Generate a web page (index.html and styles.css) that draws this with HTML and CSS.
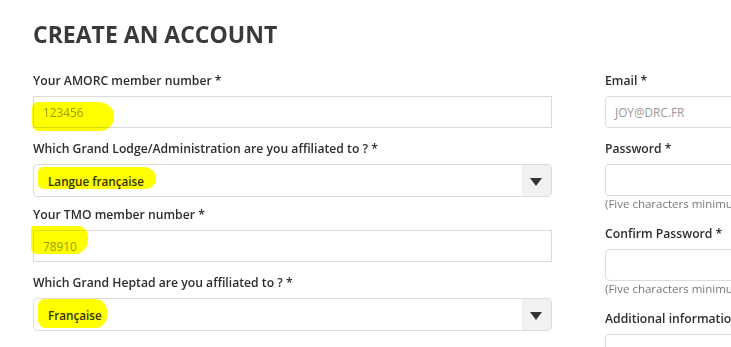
FILE: index.html
```html
<!DOCTYPE html>
<html>
<head>
  <title>Create an account</title>
  <link rel="stylesheet" href="styles.css">
</head>
<body>
  <div class="container">
    <h1>Create an account</h1>

    <div class="columns">
      <div class="col-left">
        <label class="field-label">Your AMORC member number *</label>
        <div class="box input-box">
          <span class="placeholder">123456</span>
          <span class="marker marker-1"></span>
        </div>

        <label class="field-label">Which Grand Lodge/Administration are you affiliated to ? *</label>
        <div class="box select-box">
          <span class="value">Langue française</span>
          <span class="arrow"></span>
          <span class="marker marker-2"></span>
        </div>

        <label class="field-label">Your TMO member number *</label>
        <div class="box input-box">
          <span class="placeholder">78910</span>
          <span class="marker marker-3"></span>
        </div>

        <label class="field-label">Which Grand Heptad are you affiliated to ? *</label>
        <div class="box select-box">
          <span class="value">Française</span>
          <span class="arrow"></span>
          <span class="marker marker-4"></span>
        </div>
      </div>

      <div class="col-right">
        <label class="field-label">Email *</label>
        <div class="box input-box rounded">
          <span class="placeholder">JOY@DRC.FR</span>
        </div>

        <label class="field-label">Password *</label>
        <div class="box input-box rounded with-hint"></div>
        <div class="hint">(Five characters minimum)</div>

        <label class="field-label">Confirm Password *</label>
        <div class="box input-box rounded with-hint"></div>
        <div class="hint">(Five characters minimum)</div>

        <label class="field-label">Additional information</label>
        <div class="box input-box rounded"></div>
      </div>
    </div>
  </div>
</body>
</html>
```

FILE: styles.css
```css
html,
body {
  margin: 0;
  padding: 0;
  overflow: hidden;
  background-color: #fff;
}

body {
  font-family: "Open Sans", Arial, sans-serif;
  color: #333;
}

.container {
  padding: 19px 0 0 33px;
}

h1 {
  margin: 0 0 22px;
  font-size: 23px;
  line-height: 30px;
  font-weight: 700;
  text-transform: uppercase;
  color: #3a3a3a;
}

.columns {
  display: flex;
  gap: 53px;
  width: 900px;
}

.col-left {
  width: 519px;
  flex: none;
}

.col-right {
  width: 300px;
  flex: none;
}

.field-label {
  display: block;
  font-size: 12.2px;
  line-height: 20px;
  font-weight: 600;
  color: #2e2e2e;
  margin-bottom: 5px;
  white-space: nowrap;
}

.box {
  position: relative;
  box-sizing: border-box;
  border: 1px solid #dcdcdc;
  background-color: #fff;
  display: flex;
  align-items: center;
}

.input-box {
  height: 32px;
  padding-left: 9px;
  margin-bottom: 11px;
}

.input-box.rounded {
  border-radius: 4px;
}

.input-box.with-hint {
  margin-bottom: 0;
}

.select-box {
  height: 33px;
  padding-left: 14px;
  margin-bottom: 8px;
  border-radius: 4px;
}

.placeholder {
  font-size: 11.8px;
  color: #999;
}

.value {
  font-size: 11.7px;
  font-weight: 600;
  color: #333;
}

.arrow {
  position: absolute;
  top: 0;
  right: 0;
  width: 29px;
  height: 100%;
  background-color: #f1f1f1;
  border-radius: 0 3px 3px 0;
}

.arrow::after {
  content: "";
  position: absolute;
  left: 8px;
  top: 13px;
  border-left: 6px solid transparent;
  border-right: 6px solid transparent;
  border-top: 8px solid #333;
}

.hint {
  font-size: 11.5px;
  line-height: 16px;
  color: #777;
  margin-bottom: 12px;
  white-space: nowrap;
}

/* yellow marker scribbles drawn over the values */
.marker {
  position: absolute;
  background-color: #ffff00;
  mix-blend-mode: multiply;
}

.marker-1 {
  left: -2px;
  top: 5px;
  width: 82px;
  height: 29px;
  border-radius: 6px 16px 14px 6px / 6px 14px 14px 8px;
}

.marker-2 {
  left: 4px;
  top: 2px;
  width: 118px;
  height: 22px;
  border-radius: 5px 12px 10px 5px;
}

.marker-3 {
  left: -3px;
  top: -5px;
  width: 57px;
  height: 28px;
  border-radius: 2px 10px 14px 6px;
}

.marker-4 {
  left: 4px;
  top: 0;
  width: 69px;
  height: 29px;
  border-radius: 6px 12px 12px 8px;
}
```
